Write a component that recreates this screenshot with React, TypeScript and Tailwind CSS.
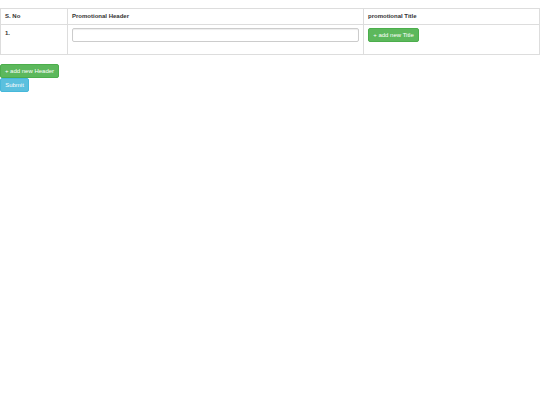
import React, { useState } from 'react';

const App = () => {
    const [headers, setHeaders] = useState<string[]>(['']);

    return (
        <div className="pt-2 text-[6px] text-[#333]" style={{ fontFamily: '"Liberation Sans", Arial, sans-serif' }}>
            <table className="w-[540px] border-collapse border border-[#ddd] mb-[9px]">
                <thead>
                    <tr>
                        <th className="w-[67px] h-[16px] border border-[#ddd] px-1 text-left font-bold align-middle">S. No</th>
                        <th className="w-[296px] border border-[#ddd] px-1 text-left font-bold align-middle">Promotional Header</th>
                        <th className="border border-[#ddd] px-1 text-left font-bold align-middle">promotional Title</th>
                    </tr>
                </thead>
                <tbody>
                    {headers.map((h, i) => (
                        <tr key={i}>
                            <td className="h-[30px] border border-[#ddd] px-1 pt-[4px] align-top font-bold">{i + 1}.</td>
                            <td className="border border-[#ddd] px-1 pt-[3px] align-top">
                                <input
                                    type="text"
                                    value={h}
                                    onChange={(e) => setHeaders(headers.map((x, j) => (j === i ? e.target.value : x)))}
                                    className="block w-full h-[14px] border border-[#ccc] rounded-[2px] shadow-[inset_0_1px_1px_rgba(0,0,0,0.075)] px-1 text-[6px]"
                                />
                            </td>
                            <td className="border border-[#ddd] px-1 pt-[3px] align-top">
                                <button className="h-[14px] w-[51px] bg-[#5cb85c] border border-[#4cae4c] rounded-[2px] text-white text-[6px] leading-none">
                                    + add new Title
                                </button>
                            </td>
                        </tr>
                    ))}
                </tbody>
            </table>
            <div className="flex flex-col items-start">
                <button
                    onClick={() => setHeaders([...headers, ''])}
                    className="h-[14px] w-[59px] bg-[#5cb85c] border border-[#4cae4c] rounded-[2px] text-white text-[6px] leading-none"
                >
                    + add new Header
                </button>
                <button className="h-[14px] w-[29px] bg-[#5bc0de] border border-[#46b8da] rounded-[2px] text-white text-[6px] leading-none">
                    Submit
                </button>
            </div>
        </div>
    );
};

export default App;
